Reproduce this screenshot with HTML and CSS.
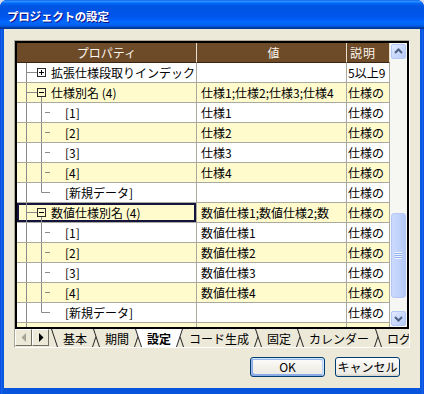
FILE: index.html
```
<!DOCTYPE html>
<html lang="ja">
<head>
<meta charset="utf-8">
<title>プロジェクトの設定</title>
<link rel="stylesheet" href="styles.css">
</head>
<body>
<svg class="defs" width="0" height="0" aria-hidden="true">
  <symbol id="tp" viewBox="0 0 34 19">
    <path d="M9.5 0V19M10 9.5H20" stroke="#8a8a8a" fill="none"/>
    <rect x="20.5" y="5.5" width="8" height="8" fill="none" stroke="#2a2a2a"/>
    <path d="M22 9.5H27M24.5 7V12" stroke="#000" fill="none"/>
  </symbol>
  <symbol id="tm" viewBox="0 0 34 19">
    <path d="M9.5 0V19M10 9.5H20M24.5 14V19" stroke="#8a8a8a" fill="none"/>
    <rect x="20.5" y="5.5" width="8" height="8" fill="none" stroke="#2a2a2a"/>
    <path d="M22 9.5H27" stroke="#000" fill="none"/>
  </symbol>
  <symbol id="tc" viewBox="0 0 48 19">
    <path d="M9.5 0V19M24.5 0V19M28 9.5H33" stroke="#8a8a8a" fill="none"/>
  </symbol>
  <symbol id="tl" viewBox="0 0 48 19">
    <path d="M9.5 0V19M24.5 0V9.5H33" stroke="#8a8a8a" fill="none"/>
  </symbol>
  <symbol id="tab2" viewBox="0 0 48 18">
    <path d="M0 0L6 18H42L48 0Z" fill="#ece9d8"/>
    <path d="M0.5 0L6.5 18M47.5 0L41.5 18" stroke="#222" fill="none"/>
  </symbol>
  <symbol id="tab5" viewBox="0 0 84 18">
    <path d="M0 0L6 18H78L84 0Z" fill="#ece9d8"/>
    <path d="M0.5 0L6.5 18M83.5 0L77.5 18" stroke="#222" fill="none"/>
  </symbol>
  <symbol id="tab2s" viewBox="0 0 48 18">
    <path d="M0 0L6 18H42L48 0Z" fill="#ffffff"/>
    <path d="M0.5 0L6.5 18M47.5 0L41.5 18" stroke="#222" fill="none"/>
  </symbol>
</svg>

<div class="window">
  <div class="titlebar"><span class="title">プロジェクトの設定</span></div>
  <div class="frame-body">
    <div class="client">
      <div class="panel">
        <div class="grid">
          <div class="sheet">
            <div class="row head">
              <div class="c c1">プロパティ</div>
              <div class="c c2">値</div>
              <div class="c c3">説明</div>
            </div>

            <div class="row">
              <div class="c c1"><svg class="g-root"><use href="#tp"/></svg><span>拡張仕様段取りインデック</span></div>
              <div class="c c2"></div>
              <div class="c c3">5以上9</div>
            </div>
            <div class="row y">
              <div class="c c1"><svg class="g-root"><use href="#tm"/></svg><span>仕様別名 (4)</span></div>
              <div class="c c2">仕様1;仕様2;仕様3;仕様4</div>
              <div class="c c3">仕様の</div>
            </div>
            <div class="row">
              <div class="c c1"><svg class="g-child"><use href="#tc"/></svg><span>[1]</span></div>
              <div class="c c2">仕様1</div>
              <div class="c c3">仕様の</div>
            </div>
            <div class="row y">
              <div class="c c1"><svg class="g-child"><use href="#tc"/></svg><span>[2]</span></div>
              <div class="c c2">仕様2</div>
              <div class="c c3">仕様の</div>
            </div>
            <div class="row">
              <div class="c c1"><svg class="g-child"><use href="#tc"/></svg><span>[3]</span></div>
              <div class="c c2">仕様3</div>
              <div class="c c3">仕様の</div>
            </div>
            <div class="row y">
              <div class="c c1"><svg class="g-child"><use href="#tc"/></svg><span>[4]</span></div>
              <div class="c c2">仕様4</div>
              <div class="c c3">仕様の</div>
            </div>
            <div class="row">
              <div class="c c1"><svg class="g-child"><use href="#tl"/></svg><span>[新規データ]</span></div>
              <div class="c c2"></div>
              <div class="c c3">仕様の</div>
            </div>
            <div class="row y">
              <div class="c c1 focus"><svg class="g-root"><use href="#tm"/></svg><span>数値仕様別名 (4)</span></div>
              <div class="c c2">数値仕様1;数値仕様2;数</div>
              <div class="c c3">仕様の</div>
            </div>
            <div class="row">
              <div class="c c1"><svg class="g-child"><use href="#tc"/></svg><span>[1]</span></div>
              <div class="c c2">数値仕様1</div>
              <div class="c c3">仕様の</div>
            </div>
            <div class="row y">
              <div class="c c1"><svg class="g-child"><use href="#tc"/></svg><span>[2]</span></div>
              <div class="c c2">数値仕様2</div>
              <div class="c c3">仕様の</div>
            </div>
            <div class="row">
              <div class="c c1"><svg class="g-child"><use href="#tc"/></svg><span>[3]</span></div>
              <div class="c c2">数値仕様3</div>
              <div class="c c3">仕様の</div>
            </div>
            <div class="row y">
              <div class="c c1"><svg class="g-child"><use href="#tc"/></svg><span>[4]</span></div>
              <div class="c c2">数値仕様4</div>
              <div class="c c3">仕様の</div>
            </div>
            <div class="row">
              <div class="c c1"><svg class="g-child"><use href="#tl"/></svg><span>[新規データ]</span></div>
              <div class="c c2"></div>
              <div class="c c3">仕様の</div>
            </div>
            <div class="row y">
              <div class="c c1"><svg class="g-root"><use href="#tp"/></svg><span>拡張仕様名称設定</span></div>
              <div class="c c2"></div>
              <div class="c c3">仕様の</div>
            </div>
          </div>

          <div class="vscroll">
            <div class="sb-btn"><div class="sb-face"><svg width="11" height="11" viewBox="0 0 11 11"><path d="M2 7L5.5 3.5L9 7" fill="none" stroke="#4d6185" stroke-width="2"/></svg></div></div>
            <div class="sb-track-top"></div>
            <div class="sb-thumb"><div class="grip"></div></div>
            <div class="sb-track-bot"></div>
            <div class="sb-btn"><div class="sb-face"><svg width="11" height="11" viewBox="0 0 11 11"><path d="M2 4L5.5 7.5L9 4" fill="none" stroke="#4d6185" stroke-width="2"/></svg></div></div>
          </div>
        </div>

        <div class="tabstrip">
          <div class="tb-btn"><svg width="8" height="9" viewBox="0 0 8 9"><path d="M6 0V9L1.5 4.5Z" fill="#a8a596"/></svg></div>
          <div class="tb-btn"><svg width="8" height="9" viewBox="0 0 8 9"><path d="M2 0V9L6.5 4.5Z" fill="#000"/></svg></div>
          <div class="tabs">
            <div class="tab w2"><svg class="tab-shape" width="48" height="18"><use href="#tab2"/></svg><span>基本</span></div>
            <div class="tab w2"><svg class="tab-shape" width="48" height="18"><use href="#tab2"/></svg><span>期間</span></div>
            <div class="tab w2 sel"><svg class="tab-shape" width="48" height="18"><use href="#tab2s"/></svg><span>設定</span></div>
            <div class="tab w5"><svg class="tab-shape" width="84" height="18"><use href="#tab5"/></svg><span>コード生成</span></div>
            <div class="tab w2"><svg class="tab-shape" width="48" height="18"><use href="#tab2"/></svg><span>固定</span></div>
            <div class="tab w5"><svg class="tab-shape" width="84" height="18"><use href="#tab5"/></svg><span>カレンダー</span></div>
            <div class="tab w2"><svg class="tab-shape" width="48" height="18"><use href="#tab2"/></svg><span>ログ</span></div>
          </div>
        </div>
      </div>

      <div class="footer">
        <button class="btn btn-ok">OK</button>
        <button class="btn btn-cancel">キャンセル</button>
      </div>
    </div>
  </div>
</div>
</body>
</html>
```

FILE: styles.css
```
* { box-sizing: border-box; }
html, body { margin: 0; padding: 0; }
body {
  width: 424px;
  height: 394px;
  overflow: hidden;
  background: #d8dce8;
  font-family: "Noto Sans CJK JP", "Noto Sans", sans-serif;
  font-size: 12px;
  color: #000;
}
.defs { position: absolute; width: 0; height: 0; overflow: hidden; }

.window {
  width: 424px;
  height: 394px;
  display: flex;
  flex-direction: column;
  border-radius: 7px 7px 0 0;
  overflow: hidden;
  background: #0a4fe0;
}
.titlebar {
  height: 29px;
  flex: none;
  display: flex;
  align-items: center;
  padding: 2px 0 0 7px;
  background: linear-gradient(to bottom, #0058ee 0%, #3593ff 4%, #288eff 6%, #127dff 8%, #036ffc 10%, #0262ee 14%, #0057e5 20%, #0054e3 24%, #0055eb 56%, #005bf5 66%, #026afe 76%, #0062ef 86%, #0052d6 92%, #0040ab 94%, #003092 100%);
}
.title {
  color: #fff;
  font-weight: bold;
  font-size: 11.5px;
  letter-spacing: -0.2px;
  text-shadow: 1px 1px 0 #0f1089;
}
.frame-body {
  flex: 1;
  display: flex;
  padding: 0 4px 6px 4px;
  background: linear-gradient(to right, #0831d9 0, #166aee 1px, #0855dd 3px, #0855dd calc(100% - 3px), #166aee calc(100% - 1px), #0831d9 100%);
}
.client {
  flex: 1;
  background: #ece9d8;
  display: flex;
  flex-direction: column;
  padding: 11px 0 0 10px;
}

/* sunken panel holding grid and sheet tabs */
.panel {
  width: 396px;
  height: 308px;
  border: 1px solid;
  border-color: #aca899 #ffffff #ffffff #aca899;
  display: flex;
  flex-direction: column;
}
.grid {
  height: 288px;
  border: 2px solid #000;
  display: flex;
  background: #fff;
}
.sheet {
  width: 373px;
  overflow: hidden;
}
.row {
  display: grid;
  grid-template-columns: 180px 150px 43px;
  height: 20px;
  background: #ffffff;
}
.row.y { background: #fffbcd; }
.c {
  border-right: 1px solid #aaa9a0;
  border-bottom: 1px solid #aaa9a0;
  white-space: nowrap;
  overflow: hidden;
  display: flex;
  align-items: center;
  line-height: 19px;
}
.c1 { padding: 0; }
.c2 { padding-left: 4px; }
.c3 { padding-left: 1px; }
.focus { box-shadow: inset 0 0 0 2px #14143c; }
.g-root { width: 34px; height: 19px; flex: none; }
.g-child { width: 48px; height: 19px; flex: none; }

.row.head {
  background: #6e4b28;
  color: #fbf6ee;
}
.head .c {
  border-right: 1px solid #e9dfcf;
  border-bottom: 1px solid #3a2410;
  justify-content: center;
}
.head .c3 { justify-content: flex-start; padding-left: 3px; letter-spacing: 1px; }

/* XP scrollbar */
.vscroll {
  width: 17px;
  flex: none;
  display: flex;
  flex-direction: column;
  background: #f6f6f2;
}
.sb-btn {
  height: 17px;
  flex: none;
  padding: 1px;
}
.sb-face {
  width: 100%;
  height: 100%;
  border: 1px solid #b4c7f5;
  border-radius: 2px;
  background: linear-gradient(135deg, #e2eafe 0%, #c6d6fc 60%, #b6cbf8 100%);
  display: flex;
  align-items: center;
  justify-content: center;
}
.sb-track-top { height: 153px; flex: none; }
.sb-track-bot { flex: 1; }
.sb-thumb {
  height: 85px;
  flex: none;
  margin: 0 1px;
  border: 1px solid #b4c7f5;
  border-radius: 3px;
  background: linear-gradient(to right, #cbdafd 0%, #c1d3fb 50%, #b4c9f8 100%);
  display: flex;
  align-items: center;
  justify-content: center;
}
.grip {
  width: 7px;
  height: 7px;
  background: repeating-linear-gradient(to bottom, #eef3fe 0, #eef3fe 1px, #8fb0f3 1px, #8fb0f3 2px);
}

/* sheet tabs */
.tabstrip {
  height: 18px;
  display: flex;
  overflow: hidden;
  background: #ece9d8;
}
.tb-btn {
  width: 17px;
  height: 17px;
  flex: none;
  display: flex;
  align-items: center;
  justify-content: center;
  border: 1px solid;
  border-color: #ffffff #716f64 #716f64 #ffffff;
  background: #ece9d8;
}
.tabs {
  display: flex;
  margin-left: 2px;
}
.tab {
  position: relative;
  height: 18px;
  flex: none;
  display: flex;
  align-items: center;
  padding: 0 12px;
  margin-left: -6px;
  line-height: 17px;
}
.tab:first-child { margin-left: 0; }
.tab.w2 { width: 48px; }
.tab.w5 { width: 84px; }
.tab-shape {
  position: absolute;
  left: 0;
  top: 0;
}
.tab span { position: relative; }
.tab.sel { z-index: 5; font-weight: bold; }

/* dialog buttons */
.footer {
  display: flex;
  justify-content: flex-end;
  gap: 10px;
  padding: 9px 20px 0 0;
}
.btn {
  height: 20px;
  padding: 0;
  border: 1px solid #003c74;
  border-radius: 3px;
  background: linear-gradient(to bottom, #ffffff 0%, #f4f3ee 40%, #ecebe6 86%, #d6d0c5 100%);
  font-family: "Noto Sans CJK JP", "Noto Sans", sans-serif;
  font-size: 12px;
  color: #000;
  line-height: 18px;
}
.btn-ok {
  width: 75px;
  box-shadow: inset -1px 1px #cee7ff, inset 1px 2px #98b8ea, inset -2px 2px #bcd4f6, inset 1px -1px #89ade4, inset 2px -2px #89ade4;
}
.btn-cancel { width: 65px; }
```
